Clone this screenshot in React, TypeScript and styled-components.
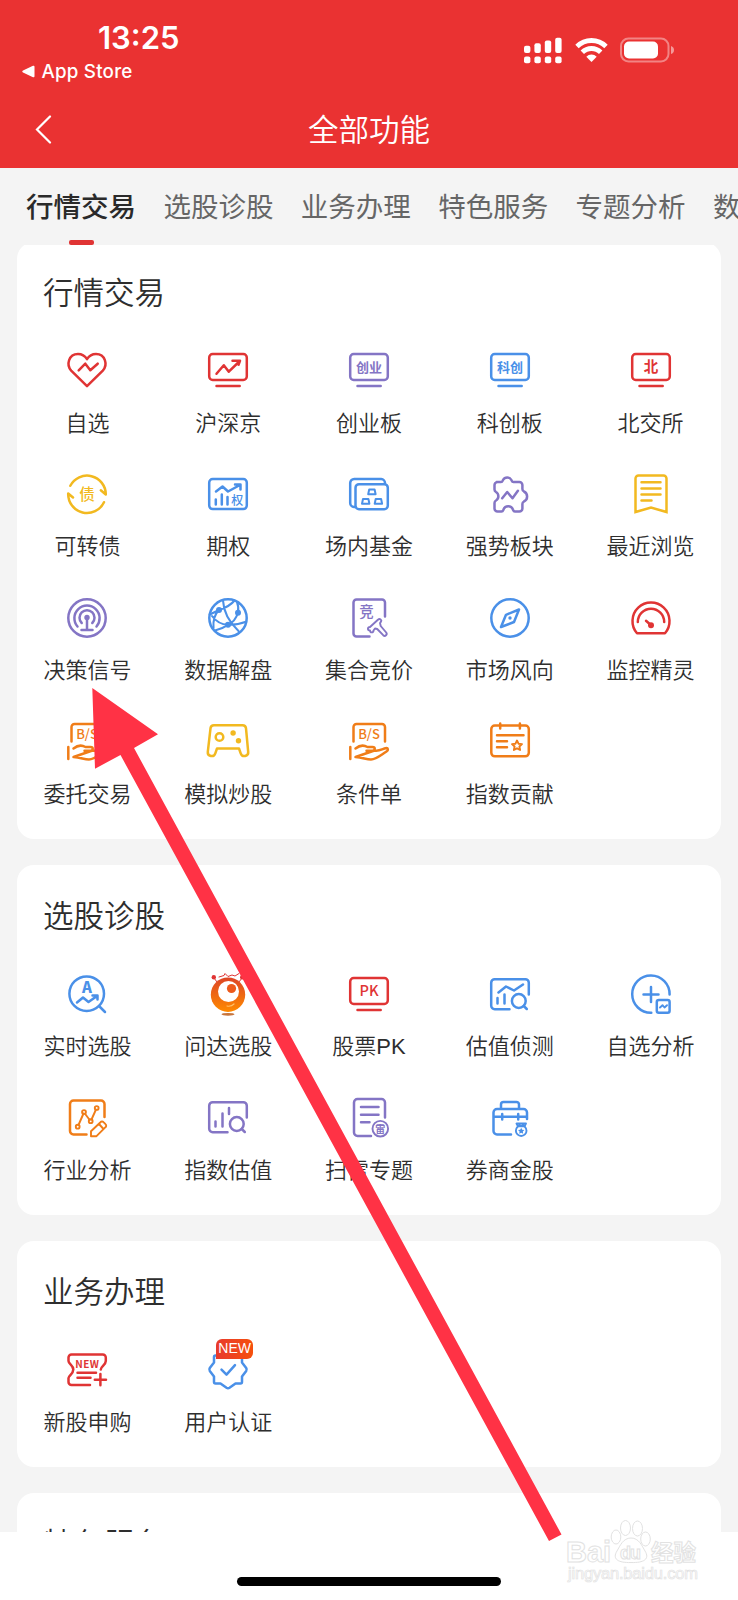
import React from "react";
import styled, { createGlobalStyle } from "styled-components";

const RED = "#e03434";
const PURPLE = "#8475c5";
const BLUE = "#4a90e8";
const YELLOW = "#f2b920";
const ORANGE = "#f07d18";
const CJK = '"Noto Sans CJK SC"';

const GlobalStyle = createGlobalStyle`
  * { box-sizing: border-box; }
  html, body { margin: 0; background: #fff; }
  body { font-family: "Liberation Sans", ${CJK}, sans-serif; color: #2e2e2e; }
`;

const Screen = styled.div`
  position: relative;
  display: flex;
  flex-direction: column;
  width: 738px;
  height: 1600px;
  overflow: hidden;
  background: #fff;
`;

const Header = styled.header`
  flex: none;
  height: 167.5px;
  background: #ea3232;
  color: #fff;
`;

const StatusBar = styled.div`
  display: flex;
  justify-content: space-between;
  height: 90px;
  padding: 20px 63px 0 22px;
`;

const StatusLeft = styled.div`
  display: flex;
  flex-direction: column;
`;

const Clock = styled.div`
  margin-left: 76px;
  font: 600 31px/36px Inter, sans-serif;
`;

const BackToApp = styled.div`
  display: flex;
  align-items: center;
  gap: 6.5px;
  margin-top: 3.5px;
  font: 500 18.8px/24px Inter, sans-serif;
  letter-spacing: 0.2px;
`;

const StatusIcons = styled.div`
  display: flex;
  gap: 12.5px;
  padding-top: 16.5px;
`;

const NavBar = styled.div`
  display: grid;
  grid-template-columns: 60px 1fr 60px;
  align-items: center;
  height: 76px;
`;

const BackButton = styled.button`
  display: flex;
  padding: 3px 0 0 35px;
  border: 0;
  background: none;
`;

const NavTitle = styled.h1`
  margin: 0;
  text-align: center;
  font: 350 30.5px/44px ${CJK}, sans-serif;
`;

const Tabs = styled.nav`
  flex: none;
  display: flex;
  gap: 27.4px;
  height: 77.5px;
  padding: 16px 0 0 26px;
  overflow: hidden;
  background: #f4f4f4;
`;

const Tab = styled.div<{ $active?: boolean }>`
  flex: none;
  display: flex;
  flex-direction: column;
  align-items: center;
  justify-content: space-between;
  font: ${(p) => (p.$active ? 500 : 400)} 27.5px/42px ${CJK}, sans-serif;
  color: ${(p) => (p.$active ? "#2a2a2a" : "#666")};
`;

const TabMark = styled.span`
  width: 25px;
  height: 5px;
  border-radius: 2px;
  background: ${RED};
`;

const Content = styled.main`
  flex: 1;
  min-height: 0;
  overflow: hidden;
  padding: 0 17px;
  background: #f4f4f4;
`;

const CardList = styled.div`
  display: flex;
  flex-direction: column;
  gap: 26.2px;
  margin-top: -2.8px;
`;

const Card = styled.section`
  padding-bottom: 29.5px;
  border-radius: 17px;
  background: #fff;
`;

const CardTitle = styled.h2`
  height: 106.2px;
  margin: 0;
  padding: 27px 26px 0;
  font: 350 30.5px/44px ${CJK}, sans-serif;
`;

const Grid = styled.div`
  display: grid;
  grid-template-columns: repeat(5, 1fr);
  row-gap: 33.4px;
`;

const Item = styled.div`
  display: flex;
  flex-direction: column;
  align-items: center;
  gap: 16.3px;
`;

const IconBox = styled.div`
  position: relative;
  width: 44px;
  height: 44px;
`;

const Label = styled.span`
  font: 350 22px/30px "Liberation Sans", ${CJK}, sans-serif;
  white-space: nowrap;
`;

const NewBadge = styled.span`
  position: absolute;
  left: 10px;
  top: -8px;
  width: 37px;
  height: 20px;
  border-radius: 6px 6px 6px 0;
  background: linear-gradient(90deg, #e83a2e, #f6500c);
  color: #fff;
  font: 14px/19px "Liberation Sans", sans-serif;
  text-align: center;
`;

const Footer = styled.footer`
  flex: none;
  display: flex;
  justify-content: center;
  height: 68px;
  padding-top: 45px;
`;

const HomeIndicator = styled.div`
  width: 264px;
  height: 9px;
  border-radius: 5px;
  background: #000;
`;

const ArrowOverlay = styled.svg`
  position: absolute;
  inset: 0;
  pointer-events: none;
`;

const Watermark = styled.svg`
  position: absolute;
  left: 560px;
  top: 1516px;
`;

const Glyph = styled.svg.attrs({ width: 44, height: 44, viewBox: "0 0 44 44" })<{ $color: string }>`
  display: block;
  overflow: visible;
  color: ${(p) => p.$color};
  fill: none;
  stroke: currentColor;
  stroke-width: 2.5;
  stroke-linecap: round;
  stroke-linejoin: round;
  text {
    fill: currentColor;
    stroke: none;
    text-anchor: middle;
    font-family: ${CJK}, sans-serif;
  }
  .solid { fill: currentColor; stroke: none; }
  .thin { stroke-width: 1.9; }
`;

const Heart = () => (
  <Glyph $color={RED}>
    <path d="M22 38.200 6.200 22.600C1 17 3.600 6 13 6c4 0 7 2 9 5.200C24 8 27 6 31 6c9.400 0 12 11 6.800 16.600Z" />
    <path d="m13.700 22.300 6.600-6.600 5 6.600 7.400-6.600" />
  </Glyph>
);

const Monitor = ({ color, children }: { color: string; children: React.ReactNode }) => (
  <Glyph $color={color}>
    <rect x="3.200" y="6.100" width="37.600" height="25.900" rx="3.500" />
    <path d="M10.500 38h23.200" />
    {children}
  </Glyph>
);

const Trend = () => (
  <Monitor color={RED}>
    <path d="m10.500 25.700 7.300-8.500 5 6.500L33.800 13M26.500 12.700h7.500l-1.500 4" />
  </Monitor>
);

const MonitorText = ({ color, text, size = 13, weight = 700 }: { color: string; text: string; size?: number; weight?: number }) => (
  <Monitor color={color}>
    <text x="22" y={19 + size * 0.37} fontSize={size} fontWeight={weight}>{text}</text>
  </Monitor>
);

const Bond = () => (
  <Glyph $color={YELLOW}>
    <path d="M5.300 13.800A18.800 18.800 0 0 1 40.800 22.500l-5-4.200" />
    <path d="M39 30.200A18.800 18.800 0 0 1 3.200 21.500l4.800 4" />
    <text x="22" y="27.500" fontSize="15.500" fontWeight="500">债</text>
  </Glyph>
);

const Option = () => (
  <Glyph $color={BLUE}>
    <rect x="3.200" y="7.100" width="37.600" height="30" rx="3.500" />
    <path d="m10 19.500 6.500-5 5.500 5 12-6.500M29 12.500h5.500v5M9.800 27.500v5M15.800 22.500v10M21.500 25v7.500" />
    <text x="31.300" y="32.500" fontSize="12" fontWeight="500">权</text>
  </Glyph>
);

const Fund = () => (
  <Glyph $color={BLUE}>
    <path d="M8 35H7a4 4 0 0 1-3.800-4V11a4 4 0 0 1 4-4h27a4 4 0 0 1 3.800 4" />
    <rect x="8.500" y="12.200" width="32.300" height="25" rx="3.500" />
    <path strokeWidth="2" d="M22.200 17.500h5.400l1 4.800h-7.400zM16 27h5.400l1 4.800h-7.400zM28.700 27h5.400l1 4.800h-7.400z" />
  </Glyph>
);

const Puzzle = () => (
  <Glyph $color={PURPLE}>
    <path d="M8.500 10H13c1.500 0 1.500-1 2-2a4.800 4.800 0 0 1 8.400 0c.5 1 .5 2 2 2h6a3 3 0 0 1 3 3v4c0 1.500.5 2 1.500 2.500a5.500 5.500 0 0 1 0 10c-1 .5-1.500 1-1.500 2.500v4.500a3 3 0 0 1-3 3h-4.500c-1.500 0-1.500-.8-2-2a5 5 0 0 0-9.400 0c-.5 1.200-.5 2-2 2h-4a3 3 0 0 1-3-3V31c0-1.500.3-1.800 1.500-2.500a5 5 0 0 0 0-8.500c-1.200-.8-1.500-1-1.500-2.500V13a3 3 0 0 1 3-3Z" />
    <path d="m14.200 26.300 5-6.300 5.300 6.300 5.400-7.500" />
  </Glyph>
);

const Bookmark = () => (
  <Glyph $color={YELLOW}>
    <path strokeLinejoin="miter" d="M6.500 40V6.500a3 3 0 0 1 3-3h25a3 3 0 0 1 3 3V40L22 35.500Z" />
    <path d="M12.500 10.300h19M12.500 16.500h19M12.500 22.500h19M12.500 28.500h10" />
  </Glyph>
);

const Signal = () => (
  <Glyph $color={PURPLE}>
    <circle cx="22" cy="22" r="18.700" />
    <path d="M12.500 30.500a12.600 12.600 0 1 1 19 0M16.700 27a7.500 7.500 0 1 1 10.600 0M22 22v12M16.500 34h11" />
    <circle className="solid" cx="22" cy="21.500" r="2.700" />
  </Glyph>
);

const Globe = () => (
  <Glyph $color={BLUE}>
    <circle cx="22" cy="22" r="18.700" />
    <path d="M17 4.500c.5 11 5.500 21 15.500 30.500M3.800 18.500 13 14C19 12 25 9 28.500 4.500M31 6c1.500 3.500 1.500 7 1 10.700C30 23 26 27 22 28.800M13 14c-5 5-6 12-5.500 18M6 20c4 5.500 9 8.500 16 8.800 7 .2 13-1 18-3M9 34.500c4-1 9-3 13-5.700" strokeWidth="2.100" />
    <circle className="solid" cx="13" cy="14" r="3" /><circle className="solid" cx="32" cy="16.700" r="3" /><circle className="solid" cx="22" cy="28.800" r="3" />
  </Glyph>
);

const Auction = () => (
  <Glyph $color={PURPLE}>
    <path d="M38 20.500V6.500a3 3 0 0 0-3-3H9.500a3 3 0 0 0-3 3v31a3 3 0 0 0 3 3h13" />
    <text x="19.500" y="20.500" fontSize="14.500" fontWeight="500">竞</text>
    <path className="thin" d="M31.200 23.500c1.500-1.500 4 .5 2.800 2.200l-1 1.300.7 3 5.500 6.500c1.500 2-1 4.500-3 2.700l-6-6.200-2.200-.5-1.500 2c0 2.500-3.500 2.500-3.500 0-3 0-2.500-3.500 0-3.500l6-5.500Z" />
  </Glyph>
);

const Compass = () => (
  <Glyph $color={BLUE}>
    <circle cx="22" cy="22" r="18.700" />
    <path d="M31 13.500 26 26 13 31l5-12.200Z" />
    <circle className="solid" cx="22" cy="22" r="1.700" />
  </Glyph>
);

const Gauge = () => (
  <Glyph $color={RED}>
    <path d="M8 37.200a18.500 18.500 0 1 1 28 0Z" />
    <path d="M8.800 26a13.200 13.200 0 0 1 26.400 0M17 24.800l4.500 4" />
    <circle className="solid" cx="22" cy="29.300" r="3" />
  </Glyph>
);

const TradeHand = () => (
  <Glyph $color={ORANGE}>
    <path d="M6.500 22.500V8a3 3 0 0 1 3-3H35a3 3 0 0 1 3 3v14.500M3.300 28v12" />
    <text x="22" y="20" fontSize="13" fontWeight="500">B/S</text>
    <path d="M8.500 29.500c5-4 9-3.200 12-1.500h5c3 0 3 3.500 0 3.800h-6M27.500 31.500c4 1 8-1.500 11-2.300 3-.5 3 2 1 3.300C34 36 29 40.500 24 40.500c-5 0-8-2-15.500-2.500Z" />
  </Glyph>
);

const Gamepad = () => (
  <Glyph $color={YELLOW}>
    <path d="M8 6.300h28.500a3.500 3.500 0 0 1 3.500 3l2.200 23.500c.5 4.500-6 6-7.500 1.500L33 29.500H11l-1.700 4.800c-1.500 4.500-8 3-7.500-1.500L4.500 9.300a3.500 3.500 0 0 1 3.500-3Z" />
    <circle cx="13.500" cy="18" r="3.800" />
    <circle className="solid" cx="27.100" cy="14" r="2.700" /><circle className="solid" cx="32.500" cy="21.700" r="2.700" />
  </Glyph>
);

const Calendar = () => (
  <Glyph $color={ORANGE}>
    <rect x="3.300" y="6.500" width="37.500" height="30.800" rx="3.500" />
    <path d="M12.200 4.500v5M31.900 4.500v5M9 16.300h26.500M9 22.300h10M9 28.300h10" />
    <path className="thin" d="m29 21.500 1.500 3.200 3.500.4-2.600 2.400.7 3.500-3.100-1.700-3.100 1.700.7-3.500-2.600-2.400 3.500-.4Z" />
  </Glyph>
);

const SmartPick = () => (
  <Glyph $color={BLUE}>
    <circle cx="21.700" cy="21.700" r="17.300" />
    <path d="m34.500 34.500 5.500 5.500M12 30.500l6-5 5.500 4.500 8.500-6M27.500 23.500h5v4" />
    <text x="22" y="20.500" fontSize="15" fontWeight="900">A</text>
  </Glyph>
);

const Robot = () => (
  <Glyph $color={RED}>
    <defs>
      <linearGradient id="ball" x1="0" y1="0" x2="0" y2="1">
        <stop offset="0" stopColor="#dd4526" />
        <stop offset="1" stopColor="#ff8a00" />
      </linearGradient>
    </defs>
    <path strokeWidth="1" d="m8 6 3 4M36 6l-3 4M13 5l5-1.500 1-2 3 3 4-1.500 3 1 4-2.500" />
    <circle className="solid" cx="7.800" cy="5.300" r="2.200" /><circle className="solid" cx="36.200" cy="5.300" r="2.200" />
    <circle cx="22" cy="22.700" r="17.200" fill="url(#ball)" stroke="none" />
    <circle cx="22.500" cy="19.500" r="10.500" fill="#fff" stroke="none" />
    <circle cx="25.500" cy="16.500" r="4.600" fill="#ed5a1c" stroke="none" />
    <path d="M21 34q4 1 7-2" stroke="#ffc069" strokeWidth="1.200" />
    <ellipse cx="22" cy="42.300" rx="6.500" ry="1.400" fill="#c8743a" stroke="none" />
  </Glyph>
);

const Inspect = ({ color, line }: { color: string; line?: boolean }) => (
  <Glyph $color={color}>
    <path d="M40.800 22.500V10.700a3.500 3.500 0 0 0-3.500-3.500H6.700a3.500 3.500 0 0 0-3.500 3.500v23a3.500 3.500 0 0 0 3.500 3.500h14.800" />
    <path d={line ? "m10.500 20.500 7.500-6 8 4 9-6M9.500 26v5.500M16.500 22.500v9" : "M9.500 26.500v5M16.500 18.500v13M23 13v6"} />
    <circle cx="30.800" cy="29" r="6.900" />
    <path d="m35.800 34 3 3" />
  </Glyph>
);

const AddChart = () => (
  <Glyph $color={BLUE}>
    <path d="M40.600 22.500A18.700 18.700 0 1 0 22.300 40.800M14.500 22.500h15M22 15v15" />
    <rect x="27.800" y="28" width="12.800" height="12.800" rx="2" />
    <path className="thin" d="m31 35.500 2.500-2.300 2 2.300 2.500-2.300" />
  </Glyph>
);

const Industry = () => (
  <Glyph $color={ORANGE}>
    <path d="M39.500 22V9a3.500 3.500 0 0 0-3.500-3.500H8.500A3.500 3.500 0 0 0 5 9v27a3.500 3.500 0 0 0 3.500 3.500h13" />
    <path className="thin" d="m13.500 30 5-11.500M20.200 19l4.500 6M26.500 24.500l4.500-10" />
    <g className="thin"><circle cx="12.700" cy="31.700" r="1.900" /><circle cx="19" cy="17" r="1.900" /><circle cx="25.700" cy="26.200" r="1.900" /><circle cx="31.700" cy="13" r="1.900" /></g>
    <path className="thin" d="M26 41.200v-5l9.500-9a2 2 0 0 1 3 0l2 2a2 2 0 0 1 0 3l-9 9ZM34 29l4.500 5" />
  </Glyph>
);

const MineScan = () => (
  <Glyph $color={PURPLE}>
    <path d="M38 22.500V7.500a3.500 3.500 0 0 0-3.500-3.500h-24A3.500 3.500 0 0 0 7 7.500V37.500A3.500 3.500 0 0 0 10.500 41H24M14 12h17.500M14 19.700h17.500M14 27.300h8.500" />
    <circle className="thin" cx="33.300" cy="33.700" r="7.800" />
    <text x="33.300" y="37.500" fontSize="10" fontWeight="700">雷</text>
  </Glyph>
);

const Briefcase = () => (
  <Glyph $color={BLUE}>
    <path d="M13 14V9.500A2.500 2.500 0 0 1 15.500 7h13A2.500 2.500 0 0 1 31 9.500V14M39 24v-6.500a3.500 3.500 0 0 0-3.500-3.500H9a3.500 3.500 0 0 0-3.500 3.500v18.500A3.500 3.500 0 0 0 9 39.500h14M6 21.700h32.500M14.200 19v5.500M30.200 19v5.500" />
    <g className="thin"><circle cx="33.200" cy="35.700" r="5.300" /><path d="M28.500 28.500h9.500l-1.500 2.800h-6.500ZM31.500 28.500v2M35 28.500v2" /></g>
    <path className="solid" d="m33.200 32.700 1 2 2.200.3-1.600 1.500.4 2.200-2-1-2 1 .4-2.200-1.600-1.500 2.200-.3Z" />
  </Glyph>
);

const NewStock = () => (
  <Glyph $color={RED}>
    <path d="M35.800 22.500c0-3 5-4.500 5-8.500V10.500a3 3 0 0 0-3-3H6.500a3 3 0 0 0-3 3V14c0 3 4.800 4 4.800 8.500S3.500 28.500 3.500 31v4a3 3 0 0 0 3 3H25" />
    <path d="M12.500 25.700h18.500M12.500 30.800h13M29.800 32.700h11.200M35.400 27v11.200" />
    <text x="22.300" y="20.500" fontSize="10" fontWeight="700" letterSpacing="0.500">NEW</text>
  </Glyph>
);

const Verified = () => (
  <>
    <Glyph $color={BLUE}>
      <path d="M8 15.500V10q0-1.500 1.500-1.500H14l6.500-4q1.500-1 3 0l6.500 4h4.500q1.500 0 1.500 1.500v5.500l4.200 5.500q1 1.500 0 3L36 29.500V35q0 1.500-1.500 1.500H29.500l-6 4.200q-1.500 1-3 0l-6-4.200H9.500Q8 36.500 8 35v-5.500L3.800 24q-1-1.500 0-3Z" />
      <path d="m15.500 22.700 5 5 8.500-9.500" />
    </Glyph>
    <NewBadge>NEW</NewBadge>
  </>
);

type Entry = { label: string; icon: React.ReactNode };
type Section = { title: string; items: Entry[] };

const tabs = ["行情交易", "选股诊股", "业务办理", "特色服务", "专题分析", "数据中心"];

const sections: Section[] = [
  {
    title: "行情交易",
    items: [
      { label: "自选", icon: <Heart /> },
      { label: "沪深京", icon: <Trend /> },
      { label: "创业板", icon: <MonitorText color={PURPLE} text="创业" /> },
      { label: "科创板", icon: <MonitorText color={BLUE} text="科创" /> },
      { label: "北交所", icon: <MonitorText color={RED} text="北" size={14.5} /> },
      { label: "可转债", icon: <Bond /> },
      { label: "期权", icon: <Option /> },
      { label: "场内基金", icon: <Fund /> },
      { label: "强势板块", icon: <Puzzle /> },
      { label: "最近浏览", icon: <Bookmark /> },
      { label: "决策信号", icon: <Signal /> },
      { label: "数据解盘", icon: <Globe /> },
      { label: "集合竞价", icon: <Auction /> },
      { label: "市场风向", icon: <Compass /> },
      { label: "监控精灵", icon: <Gauge /> },
      { label: "委托交易", icon: <TradeHand /> },
      { label: "模拟炒股", icon: <Gamepad /> },
      { label: "条件单", icon: <TradeHand /> },
      { label: "指数贡献", icon: <Calendar /> },
    ],
  },
  {
    title: "选股诊股",
    items: [
      { label: "实时选股", icon: <SmartPick /> },
      { label: "问达选股", icon: <Robot /> },
      { label: "股票PK", icon: <MonitorText color={RED} text="PK" size={14.5} weight={500} /> },
      { label: "估值侦测", icon: <Inspect color={BLUE} line /> },
      { label: "自选分析", icon: <AddChart /> },
      { label: "行业分析", icon: <Industry /> },
      { label: "指数估值", icon: <Inspect color={PURPLE} /> },
      { label: "扫雷专题", icon: <MineScan /> },
      { label: "券商金股", icon: <Briefcase /> },
    ],
  },
  {
    title: "业务办理",
    items: [
      { label: "新股申购", icon: <NewStock /> },
      { label: "用户认证", icon: <Verified /> },
    ],
  },
  { title: "特色服务", items: [] },
];

const Cellular = () => (
  <svg width="38" height="27" viewBox="0 0 38 27" fill="#fff">
    {[8.7, 6.3, 3.5, 0.7].map((y, i) => (
      <g key={y}>
        <rect x={i * 10.4} y={y} width="6.400" height={16 - y} rx="2" />
        <rect x={i * 10.4} y="19.500" width="6.400" height="6.800" rx="2" />
      </g>
    ))}
  </svg>
);

const Wifi = () => (
  <svg width="33" height="26" viewBox="0 0 33 26" fill="none" stroke="#fff" strokeWidth="4.800">
    <path d="M2 9.500a20.500 20.500 0 0 1 29 0M7.300 15.300a13 13 0 0 1 18.400 0" />
    <path d="m16.500 25-5.200-5.300a7.500 7.500 0 0 1 10.400 0Z" fill="#fff" stroke="none" />
  </svg>
);

const Battery = () => (
  <svg width="55" height="26" viewBox="0 0 55 26">
    <rect x="1" y="1.500" width="47.500" height="23" rx="7.500" fill="none" stroke="#fff" strokeOpacity=".4" strokeWidth="2" />
    <rect x="4" y="4.500" width="34" height="17" rx="5" fill="#fff" />
    <path d="M51 9q3 1 3 4t-3 4Z" fill="#fff" fillOpacity=".5" />
  </svg>
);

export default function App() {
  return (
    <Screen>
      <GlobalStyle />
      <Header>
        <StatusBar>
          <StatusLeft>
            <Clock>13:25</Clock>
            <BackToApp>
              <svg width="13" height="13" viewBox="0 0 13 13" fill="#fff"><path d="M1 5.600 11 .8q1.500-.5 1.500 1v9.400q0 1.500-1.500 1L1 7.400q-1.500-.9 0-1.800Z" /></svg>
              App Store
            </BackToApp>
          </StatusLeft>
          <StatusIcons><Cellular /><Wifi /><Battery /></StatusIcons>
        </StatusBar>
        <NavBar>
          <BackButton aria-label="返回">
            <svg width="17" height="29" viewBox="0 0 17 29" fill="none" stroke="#fff" strokeWidth="2.200" strokeLinecap="round"><path d="M15 1.500 2 14.500l13 13" /></svg>
          </BackButton>
          <NavTitle>全部功能</NavTitle>
        </NavBar>
      </Header>
      <Tabs>
        {tabs.map((t, i) => (
          <Tab key={t} $active={i === 0}>{t}{i === 0 && <TabMark />}</Tab>
        ))}
      </Tabs>
      <Content>
        <CardList>
          {sections.map((s) => (
            <Card key={s.title}>
              <CardTitle>{s.title}</CardTitle>
              <Grid>
                {s.items.map((it) => (
                  <Item key={it.label}>
                    <IconBox>{it.icon}</IconBox>
                    <Label>{it.label}</Label>
                  </Item>
                ))}
              </Grid>
            </Card>
          ))}
        </CardList>
      </Content>
      <Footer><HomeIndicator /></Footer>
      <ArrowOverlay width="738" height="1600" viewBox="0 0 738 1600">
        <path fill="#ff3245" d="M92.300 688 158 734.300 134 748 561.500 1534.500 549 1541 120.500 755 95 768.700Z" />
      </ArrowOverlay>
      <Watermark width="150" height="75" viewBox="0 0 150 75" fill="#fff" stroke="#e2e2e2" strokeWidth="1">
        <text x="6" y="46" fontFamily="Liberation Sans" fontWeight="700" fontSize="29" textLength="45">Bai</text>
        <ellipse cx="56" cy="21" rx="4.800" ry="7" /><ellipse cx="65.500" cy="12" rx="5" ry="7.500" /><ellipse cx="77.500" cy="12.500" rx="5" ry="7.500" /><ellipse cx="85.500" cy="23" rx="4.800" ry="7" />
        <path d="M71 22c8 0 11 8 14 13 5 8-1 12-14 11.500-13 .5-19-3.500-14-11.500 3-5 6-13 14-13Z" />
        <text x="60" y="43" fontFamily="Liberation Sans" fontWeight="700" fontSize="18" textLength="21">du</text>
        <text x="91" y="45" fontFamily="Noto Sans CJK SC" fontWeight="700" fontSize="22.500">经验</text>
        <text x="8" y="63" fontFamily="Liberation Sans" fontSize="16.500" textLength="130" strokeWidth="0.700">jingyan.baidu.com</text>
      </Watermark>
    </Screen>
  );
}
